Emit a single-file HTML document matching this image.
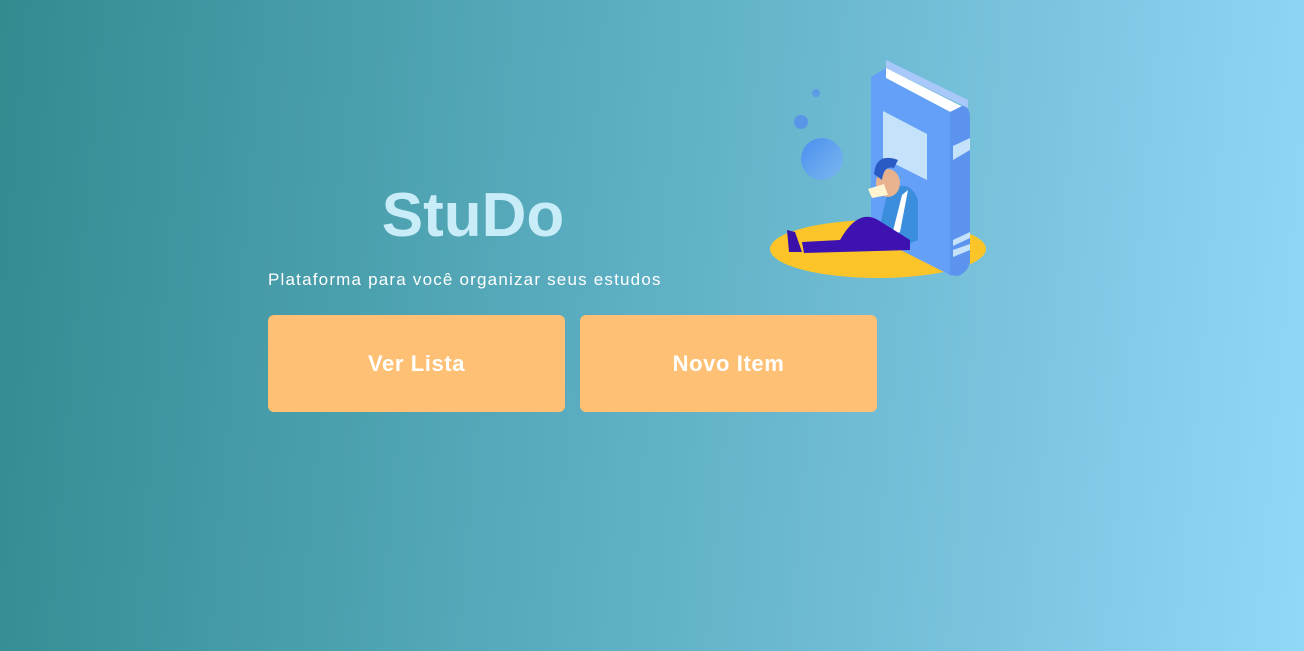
<!DOCTYPE html>
<html><head><meta charset="utf-8"><style>
html,body{margin:0;padding:0;width:1304px;height:651px;overflow:hidden}
body{background:linear-gradient(95deg,#338b90 0%,#5aadc0 45%,#7ec6e2 80%,#90d8f8 100%);font-family:"Liberation Sans",sans-serif;position:relative}
.t{position:absolute;left:268px;width:410px;top:180px;text-align:center;font-size:62px;font-weight:bold;color:#c8ecf8;letter-spacing:0px}
.s{position:absolute;left:268px;top:270px;font-size:17px;color:#fff;letter-spacing:1.2px;white-space:nowrap}
.b{position:absolute;top:315px;width:297px;height:97px;background:#fdc074;border-radius:6px;color:#fff;font-weight:bold;font-size:22px;letter-spacing:0.6px;display:flex;align-items:center;justify-content:center}
svg{position:absolute;left:760px;top:50px}
</style></head><body>
<div class="t">StuDo</div>
<div class="s">Plataforma para você organizar seus estudos</div>
<div class="b" style="left:268px">Ver Lista</div>
<div class="b" style="left:580px">Novo Item</div>
<svg width="240" height="240" viewBox="0 0 240 240">
<defs><linearGradient id="g" x1="0" y1="0" x2="1" y2="1"><stop offset="0" stop-color="#4b8ef0"/><stop offset="1" stop-color="#7ab8ee"/></linearGradient></defs>
<ellipse cx="118" cy="199" rx="108" ry="29" fill="#fbc52a"/>
<circle cx="56" cy="43" r="4" fill="#5e9be6"/>
<circle cx="41" cy="72" r="7" fill="#5a96e8"/>
<circle cx="62" cy="109" r="21" fill="url(#g)"/>
<polygon points="126,10 208,50 208,58 126,18" fill="#a9c8fa"/>
<polygon points="126,18 205,58 200,67 126,28" fill="#fff"/>
<polygon points="111,27 126,18 126,28 190,62 190,225 111,185" fill="#64a0f8"/>
<path d="M190 62 L202 56 Q210 56 210 68 L210 212 Q208 222 198 226 L190 225 Z" fill="#5b93ee"/>
<polygon points="123,61 167,84 167,130 123,108" fill="#c5e2fb"/>
<polygon points="193,96 210,88 210,100 193,110" fill="#c5e2fb"/>
<polygon points="193,190 210,182 210,188 193,196" fill="#c5e2fb"/>
<polygon points="193,200 210,194 210,200 193,207" fill="#c5e2fb"/>
<path d="M128 140 Q150 128 158 150 L158 190 L140 198 L118 185 Z" fill="#3a8edc"/>
<path d="M142 145 L148 140 L140 182 L132 185 Z" fill="#fff"/>
<ellipse cx="128" cy="133" rx="12" ry="14" fill="#e9b28f"/>
<path d="M114 124 Q116 102 138 110 L134 118 Q124 115 122 130 Z" fill="#2a5bc4"/>
<path d="M108 139 L124 134 L128 145 L112 148 Z" fill="#fff4d0"/>
<path d="M42 192 L80 190 Q98 158 118 170 L150 190 L150 200 L44 203 Z" fill="#3d12b0"/>
<path d="M27 180 L35 182 L42 202 L29 202 Z" fill="#3a10a8"/>
</svg>
</body></html>
